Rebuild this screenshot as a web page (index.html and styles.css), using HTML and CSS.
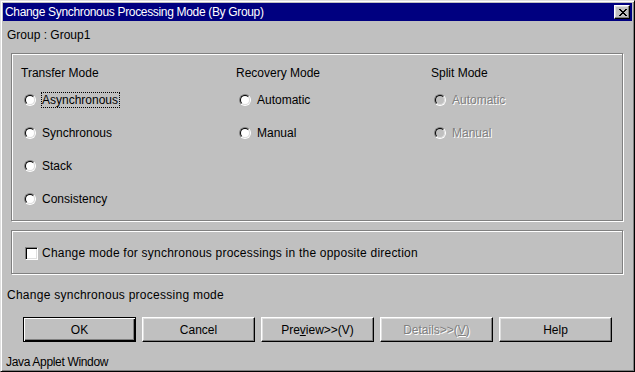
FILE: index.html
```html
<!DOCTYPE html>
<html>
<head>
<meta charset="utf-8">
<link rel="stylesheet" href="styles.css">
</head>
<body>
<div class="window">
  <div class="titlebar">
    <span class="title">Change Synchronous Processing Mode (By Group)</span>
    <span class="close">
      <svg width="8" height="7" viewBox="0 0 8 7" shape-rendering="crispEdges"><path fill="#000" d="M0 0h2v1H0zM6 0h2v1H6zM1 1h2v1H1zM5 1h2v1H5zM2 2h4v1H2zM3 3h2v1H3zM2 4h4v1H2zM1 5h2v1H1zM5 5h2v1H5zM0 6h2v1H0zM6 6h2v1H6z"/></svg>
    </span>
  </div>
  <div class="content">
    <div class="group-label">Group : Group1</div>
    <div class="panel modes">
      <div class="col col-transfer">
        <div class="heading">Transfer Mode</div>
        <div class="opts">
          <div class="opt"><span class="radio"></span><span class="lbl focus">Asynchronous</span></div>
          <div class="opt"><span class="radio"></span><span class="lbl">Synchronous</span></div>
          <div class="opt"><span class="radio"></span><span class="lbl">Stack</span></div>
          <div class="opt"><span class="radio"></span><span class="lbl">Consistency</span></div>
        </div>
      </div>
      <div class="col col-recovery">
        <div class="heading">Recovery Mode</div>
        <div class="opts">
          <div class="opt"><span class="radio"></span><span class="lbl">Automatic</span></div>
          <div class="opt"><span class="radio"></span><span class="lbl">Manual</span></div>
        </div>
      </div>
      <div class="col col-split">
        <div class="heading">Split Mode</div>
        <div class="opts">
          <div class="opt disabled"><span class="radio"></span><span class="lbl">Automatic</span></div>
          <div class="opt disabled"><span class="radio"></span><span class="lbl">Manual</span></div>
        </div>
      </div>
    </div>
    <div class="panel options">
      <div class="check-row"><span class="checkbox"></span><span class="check-lbl">Change mode for synchronous processings in the opposite direction</span></div>
    </div>
    <div class="status">Change synchronous processing mode</div>
    <div class="buttons">
      <span class="btn default">OK</span>
      <span class="btn">Cancel</span>
      <span class="btn">Pre<u>v</u>iew&gt;&gt;(V)</span>
      <span class="btn disabled">Details&gt;&gt;(<u>V</u>)</span>
      <span class="btn">Help</span>
    </div>
    <div class="applet-label">Java Applet Window</div>
  </div>
</div>
</body>
</html>
```
FILE: styles.css
```css
html, body {
  margin: 0;
  padding: 0;
  background: #c0c0c0;
}
body {
  font-family: "Liberation Sans", Arial, sans-serif;
  font-size: 12px;
  line-height: 14px;
  color: #000;
}
.window {
  width: 635px;
  height: 372px;
  box-sizing: border-box;
  border: 1px solid;
  border-color: #dfdfdf #000 #000 #dfdfdf;
  box-shadow: inset 1px 1px #fff, inset -1px -1px #808080;
  padding: 2px;
  background: #c0c0c0;
  overflow: hidden;
  display: flex;
  flex-direction: column;
}
.titlebar {
  height: 18px;
  background: #000080;
  color: #fff;
  display: flex;
  align-items: center;
  justify-content: space-between;
  padding: 0 2px;
}
.title {
  line-height: 18px;
  white-space: nowrap;
  letter-spacing: -0.33px;
}
.close {
  width: 16px;
  height: 14px;
  box-sizing: border-box;
  background: #c0c0c0;
  border: 1px solid;
  border-color: #fff #000 #000 #fff;
  box-shadow: inset -1px -1px #808080, inset 1px 1px #dfdfdf;
  display: flex;
  align-items: center;
  justify-content: center;
  padding-left: 1px;
}
.close svg { display: block; }
.content {
  display: flex;
  flex-direction: column;
}
.group-label {
  margin-top: 7px;
  padding-left: 4px;
}
.panel {
  margin: 0 9px 0 8px;
  border: 1px solid #808080;
  box-shadow: inset 1px 1px #fff, 1px 1px #fff;
}
.modes {
  margin-top: 11px;
  padding: 12px 0 11px 9px;
  display: grid;
  grid-template-columns: 215px 195px 1fr;
}
.heading {
  height: 14px;
  white-space: nowrap;
}
.opts {
  margin-top: 10px;
  display: flex;
  flex-direction: column;
  gap: 13px;
}
.opt {
  height: 20px;
  display: flex;
  align-items: center;
  padding-left: 3px;
}
.radio {
  width: 12px;
  height: 12px;
  box-sizing: border-box;
  border-radius: 50%;
  border: 1px solid;
  border-color: #808080 #fff #fff #808080;
  flex: none;
}
.radio::before {
  content: "";
  display: block;
  width: 10px;
  height: 10px;
  box-sizing: border-box;
  border-radius: 50%;
  border: 1px solid;
  border-color: #000 #dfdfdf #dfdfdf #000;
  background: #fff;
}
.opt.disabled .radio::before {
  background: #c0c0c0;
}
.lbl {
  margin-left: 5px;
  border: 1px dotted transparent;
  padding: 0 1px 0 0;
  white-space: nowrap;
}
.lbl.focus {
  border-color: #000;
}
.opt.disabled .lbl {
  color: #808080;
  text-shadow: 1px 1px #fff;
}
.options {
  margin-top: 9px;
  padding: 12px 0 10px 13px;
}
.check-row {
  height: 20px;
  display: flex;
  align-items: center;
}
.checkbox {
  width: 13px;
  height: 13px;
  box-sizing: border-box;
  border: 1px solid;
  border-color: #808080 #fff #fff #808080;
  box-shadow: inset 1px 1px #000, inset -1px -1px #dfdfdf;
  background: #fff;
  flex: none;
}
.check-lbl {
  margin-left: 4px;
  white-space: nowrap;
  letter-spacing: 0.22px;
}
.status {
  margin-top: 14px;
  padding-left: 4px;
  letter-spacing: 0.26px;
}
.buttons {
  margin-top: 15px;
  padding-left: 20px;
  display: flex;
  gap: 6px;
}
.btn {
  width: 113px;
  height: 25px;
  box-sizing: border-box;
  border: 1px solid;
  border-color: #fff #000 #000 #fff;
  box-shadow: inset -1px -1px #808080, inset 1px 1px #dfdfdf;
  display: flex;
  align-items: center;
  justify-content: center;
  white-space: nowrap;
}
.btn.default {
  border-color: #000;
  box-shadow: inset 1px 1px #fff, inset -1px -1px #000, inset -2px -2px #808080;
}
.btn.disabled {
  color: #808080;
  text-shadow: 1px 1px #fff;
}
.applet-label {
  margin-top: 13px;
  padding-left: 3px;
  letter-spacing: -0.33px;
}
```
